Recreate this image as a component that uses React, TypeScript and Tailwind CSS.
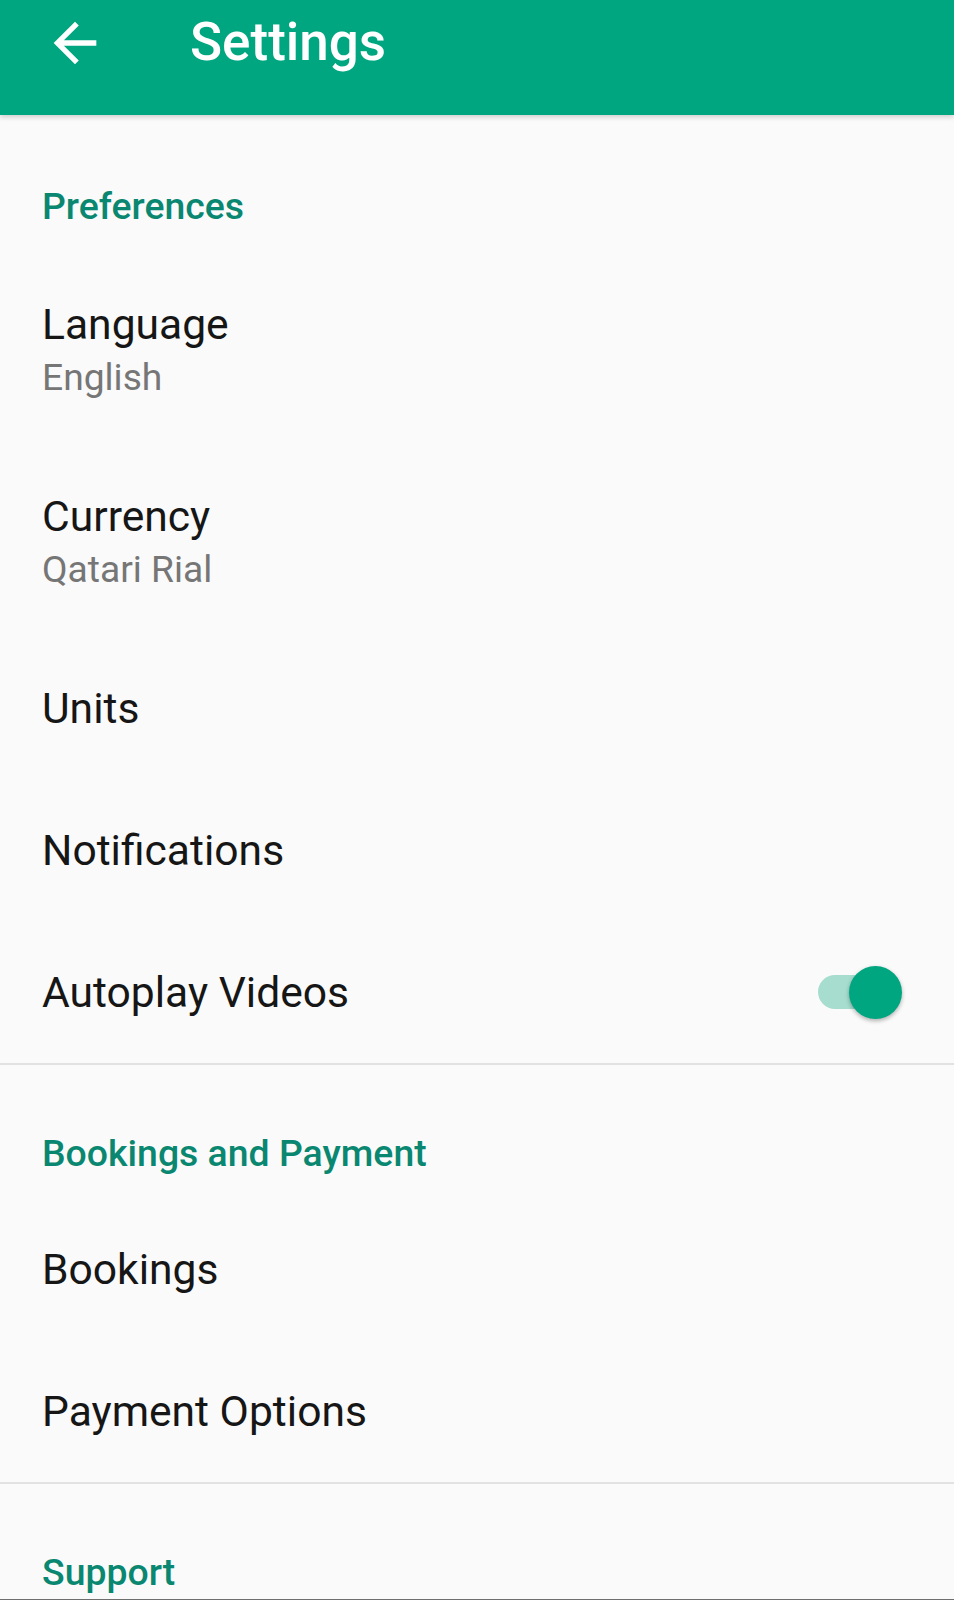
import React from "react";

const font = { fontFamily: "Roboto, 'Noto Sans', sans-serif" };

function Category({ title, first }: { title: string; first?: boolean }) {
  return (
    <div className={`shrink-0 ${first ? "pt-[66px] pb-[22px]" : "pt-[63px] pb-[20px]"}`}>
      <div className="pl-[42px] text-[37.4px] leading-[50px] font-medium text-[#0a8770]">{title}</div>
    </div>
  );
}

function Row({ title, summary, toggle }: { title: string; summary?: string; toggle?: boolean }) {
  return (
    <div
      className={`shrink-0 flex items-center pl-[42px] pr-[52px] ${summary ? "h-[192px]" : "h-[142px]"}`}
    >
      <div className="flex-1 flex flex-col">
        <div className="text-[42.6px] leading-[56px] text-[#161616]">{title}</div>
        {summary && <div className="text-[37.2px] leading-[50px] text-[#767676]">{summary}</div>}
      </div>
      {toggle && (
        <div className="relative w-[84px] h-[53px] flex items-center">
          <div className="w-[76px] h-[34px] rounded-full bg-[#a6ddcf]" />
          <div className="absolute right-0 top-0 w-[53px] h-[53px] rounded-full bg-[#00a680] shadow-[0_2px_4px_rgba(0,0,0,0.3)]" />
        </div>
      )}
    </div>
  );
}

function Divider() {
  return <div className="shrink-0 h-[2px] bg-[#e2e2e2]" />;
}

export default function App() {
  return (
    <div style={font} className="w-[954px] h-[1600px] bg-[#fafafa] overflow-hidden flex flex-col border-b border-[#6e6e6e]">
      <div className="relative z-10 h-[115px] shrink-0 bg-[#00a680] flex items-center pb-[30px] shadow-[0_2px_5px_rgba(0,0,0,0.18)]">
        <div className="w-[64px] h-[64px] ml-[43px] flex items-center justify-center">
          <svg width="64" height="64" viewBox="0 0 24 24" fill="#ffffff">
            <path d="M20 11H7.83l5.59-5.59L12 4l-8 8 8 8 1.41-1.41L7.83 13H20v-2z" />
          </svg>
        </div>
        <div className="ml-[83px] text-[53px] font-medium text-white leading-none">Settings</div>
      </div>
      <Category title="Preferences" first />
      <Row title="Language" summary="English" />
      <Row title="Currency" summary="Qatari Rial" />
      <Row title="Units" />
      <Row title="Notifications" />
      <Row title="Autoplay Videos" toggle />
      <Divider />
      <Category title="Bookings and Payment" />
      <Row title="Bookings" />
      <Row title="Payment Options" />
      <Divider />
      <Category title="Support" />
    </div>
  );
}
